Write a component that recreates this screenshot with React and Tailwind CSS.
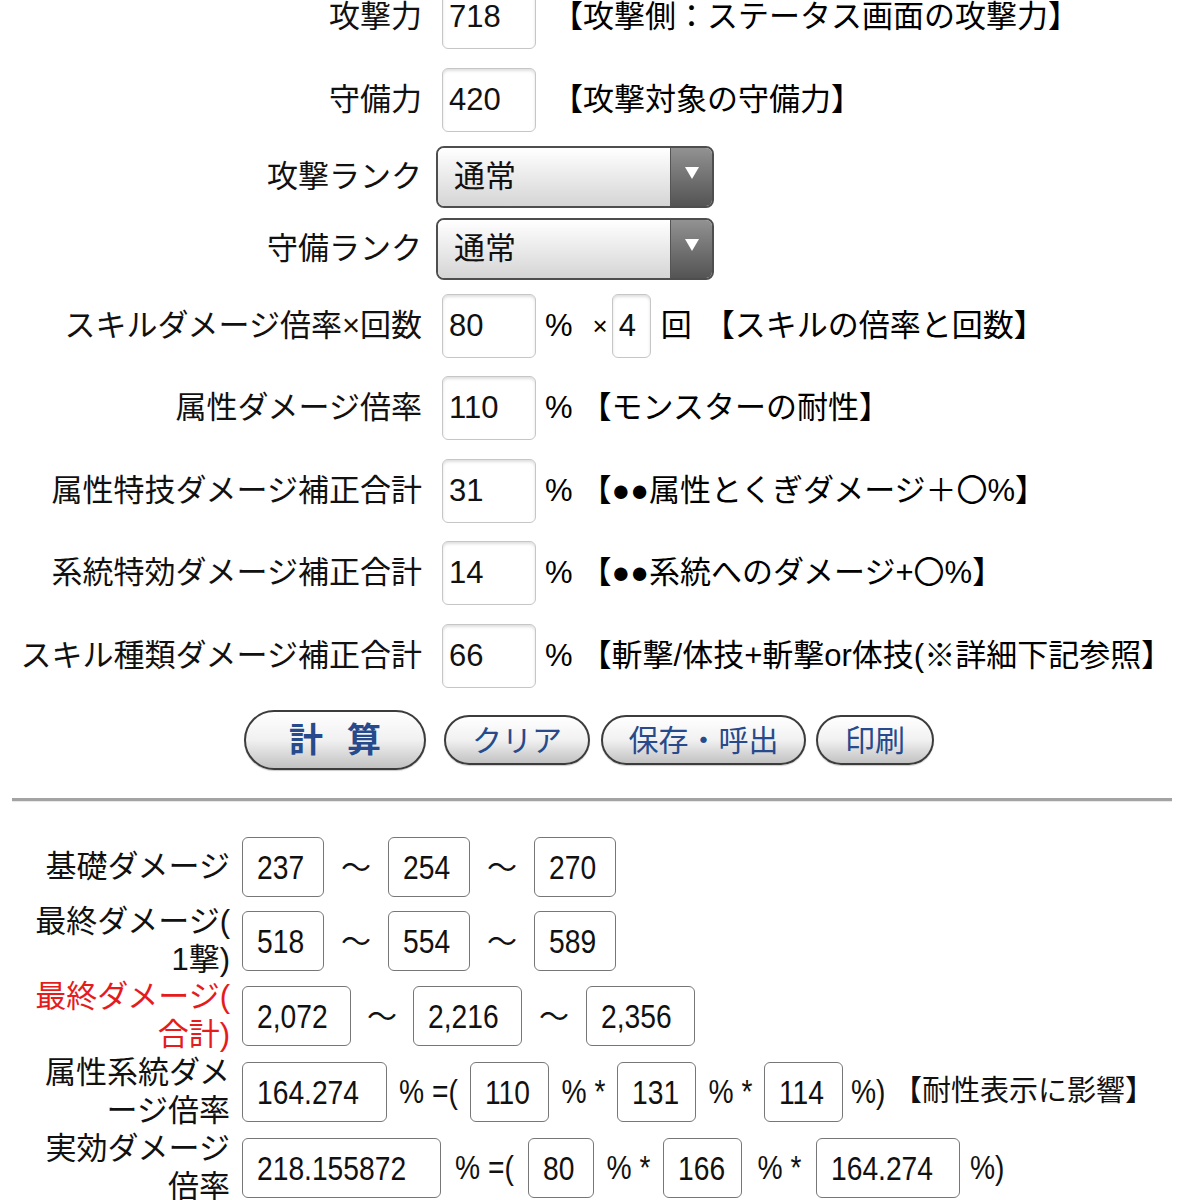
import React from 'react';

const jp = "font-['Liberation_Sans','Noto_Sans_CJK_JP',sans-serif]";

const Field = ({ value, w = 'w-[94px]' }) => (
  <div className={`h-16 ${w} shrink-0 rounded-md border border-[#c6c6c6] bg-white shadow-[inset_0_2px_3px_rgba(0,0,0,0.13)] flex items-center pl-1.5 text-[31px] text-[#111]`}>
    {value}
  </div>
);

const Select = ({ value }) => (
  <div className="flex h-[62px] w-[278px] shrink-0 rounded-lg border-2 border-[#4e4e4e] overflow-hidden">
    <div className="flex-1 bg-linear-to-b from-white to-[#d5d5d5] flex items-center pl-4 text-[31px] text-[#111]">{value}</div>
    <div className="w-[42px] border-l border-[#555] bg-linear-to-b from-[#929292] to-[#545454] flex justify-center pt-[19px]">
      <svg width="14" height="12" viewBox="0 0 14 12">
        <path d="M0 0 L14 0 L7 12 Z" fill="#fff" />
      </svg>
    </div>
  </div>
);

const Row = ({ label, children, className = '' }) => (
  <div className={`flex items-center ${className}`}>
    <div className="w-[422px] shrink-0 text-right whitespace-nowrap text-[31px] text-[#111]">{label}</div>
    {children}
  </div>
);

const Pill = ({ children, className = '' }) => (
  <div className={`rounded-full border-2 border-[#3c3c3c] bg-linear-to-b from-white via-[#f1f1f1] to-[#c2c2c2] flex items-center justify-center text-[#264a8c] shadow-[0_1px_1px_rgba(0,0,0,0.2)] ${className}`}>
    {children}
  </div>
);

// condensed look for the result digits
const N = ({ children, origin = 'origin-left' }) => (
  <span className={`inline-block ${origin} scale-x-83 text-[34px] leading-none`}>{children}</span>
);

const Box = ({ value, w }) => (
  <div className={`h-[60px] ${w} shrink-0 rounded-md border-[1.5px] border-[#777] bg-white flex items-center pl-3.5 text-[#111] whitespace-nowrap`}>
    <N>{value}</N>
  </div>
);

const RLabel = ({ children, red }) => (
  <div className="w-[230px] h-[60px] shrink-0 flex items-center justify-end">
    <div className={`text-right text-[31px] leading-[38px] whitespace-nowrap ${red ? 'text-[#e51c1c]' : 'text-[#111]'}`}>
      {children}
    </div>
  </div>
);

const Tilde = ({ className = '' }) => (
  <span className={`w-[30px] shrink-0 text-center text-[30px] text-[#111] ${className}`}>～</span>
);

const Op = ({ children, w }) => (
  <span className={`${w} shrink-0 text-center text-[#111] whitespace-nowrap`}>
    <N origin="origin-center">{children}</N>
  </span>
);

export default function App() {
  return (
    <div className={`w-[1200px] h-[1200px] overflow-hidden bg-white ${jp}`}>
      <div className="-mt-[15px] flex flex-col">
        <Row label="攻撃力">
          <div className="ml-5"><Field value="718" /></div>
          <span className="ml-4 text-[31px] whitespace-nowrap">【攻撃側：ステータス画面の攻撃力】</span>
        </Row>
        <Row label="守備力" className="mt-[19px]">
          <div className="ml-5"><Field value="420" /></div>
          <span className="ml-4 text-[31px] whitespace-nowrap">【攻撃対象の守備力】</span>
        </Row>
        <Row label="攻撃ランク" className="mt-[14px]">
          <div className="ml-[14px]"><Select value="通常" /></div>
        </Row>
        <Row label="守備ランク" className="mt-[10px]">
          <div className="ml-[14px]"><Select value="通常" /></div>
        </Row>
        <Row label="スキルダメージ倍率×回数" className="mt-[14px]">
          <div className="ml-5"><Field value="80" /></div>
          <span className="ml-[9px] text-[31px]">%</span>
          <span className="ml-[20px] text-[26px]">×</span>
          <div className="ml-1"><Field value="4" w="w-[39px]" /></div>
          <span className="ml-2.5 text-[31px]">回</span>
          <span className="ml-3 text-[31px] whitespace-nowrap">【スキルの倍率と回数】</span>
        </Row>
        <Row label="属性ダメージ倍率" className="mt-[18px]">
          <div className="ml-5"><Field value="110" /></div>
          <span className="ml-[9px] text-[31px]">%</span>
          <span className="ml-2 text-[31px] whitespace-nowrap">【モンスターの耐性】</span>
        </Row>
        <Row label="属性特技ダメージ補正合計" className="mt-[19px]">
          <div className="ml-5"><Field value="31" /></div>
          <span className="ml-[9px] text-[31px]">%</span>
          <span className="ml-2 text-[31px] whitespace-nowrap">【●●属性とくぎダメージ＋〇%】</span>
        </Row>
        <Row label="系統特効ダメージ補正合計" className="mt-[18px]">
          <div className="ml-5"><Field value="14" /></div>
          <span className="ml-[9px] text-[31px]">%</span>
          <span className="ml-2 text-[31px] whitespace-nowrap">【●●系統へのダメージ+〇%】</span>
        </Row>
        <Row label="スキル種類ダメージ補正合計" className="mt-[19px]">
          <div className="ml-5"><Field value="66" /></div>
          <span className="ml-[9px] text-[31px]">%</span>
          <span className="ml-2 text-[31px] whitespace-nowrap">【斬撃/体技+斬撃or体技(※詳細下記参照】</span>
        </Row>

        <div className="mt-[22px] flex items-center pl-[244px]">
          <Pill className="h-[60px] w-[182px] text-[34px] font-bold gap-6">
            <span>計</span><span>算</span>
          </Pill>
          <Pill className="ml-[18px] h-[50px] w-[146px] text-[30px]">クリア</Pill>
          <Pill className="ml-[11px] h-[50px] w-[205px] text-[30px]">保存・呼出</Pill>
          <Pill className="ml-[10px] h-[50px] w-[118px] text-[30px]">印刷</Pill>
        </div>

        <div className="mt-[28px] ml-3 w-[1160px] h-[3px] bg-[#a3a3a3] shadow-[0_1px_1px_rgba(0,0,0,0.1)]" />
      </div>

      <div className="mt-[36px] flex flex-col">
        <div className="flex items-center">
          <RLabel>基礎ダメージ</RLabel>
          <div className="ml-3"><Box value="237" w="w-[82px]" /></div>
          <Tilde className="mx-[17px]" />
          <Box value="254" w="w-[82px]" />
          <Tilde className="mx-[17px]" />
          <Box value="270" w="w-[82px]" />
        </div>
        <div className="mt-[14px] flex items-center">
          <RLabel>最終ダメージ(<br />1撃)</RLabel>
          <div className="ml-3"><Box value="518" w="w-[82px]" /></div>
          <Tilde className="mx-[17px]" />
          <Box value="554" w="w-[82px]" />
          <Tilde className="mx-[17px]" />
          <Box value="589" w="w-[82px]" />
        </div>
        <div className="mt-[15px] flex items-center">
          <RLabel red>最終ダメージ(<br />合計)</RLabel>
          <div className="ml-3"><Box value="2,072" w="w-[109px]" /></div>
          <Tilde className="mx-[16px]" />
          <Box value="2,216" w="w-[109px]" />
          <Tilde className="mx-[17px]" />
          <Box value="2,356" w="w-[109px]" />
        </div>
        <div className="mt-[16px] flex items-center">
          <RLabel>属性系統ダメ<br />ージ倍率</RLabel>
          <div className="ml-3"><Box value="164.274" w="w-[145px]" /></div>
          <Op w="w-[83px]">% =(</Op>
          <Box value="110" w="w-[79px]" />
          <Op w="w-[68px]">% *</Op>
          <Box value="131" w="w-[79px]" />
          <Op w="w-[68px]">% *</Op>
          <Box value="114" w="w-[79px]" />
          <span className="ml-2 w-[38px] shrink-0 text-[#111]"><N>%)</N></span>
          <span className="ml-1 text-[29px] whitespace-nowrap text-[#111]">【耐性表示に影響】</span>
        </div>
        <div className="mt-[16px] flex items-center">
          <RLabel>実効ダメージ<br />倍率</RLabel>
          <div className="ml-3"><Box value="218.155872" w="w-[199px]" /></div>
          <Op w="w-[87px]">% =(</Op>
          <Box value="80" w="w-[66px]" />
          <Op w="w-[69px]">% *</Op>
          <Box value="166" w="w-[79px]" />
          <Op w="w-[74px]">% *</Op>
          <Box value="164.274" w="w-[144px]" />
          <span className="ml-2.5 text-[#111]"><N>%)</N></span>
        </div>
      </div>
    </div>
  );
}
